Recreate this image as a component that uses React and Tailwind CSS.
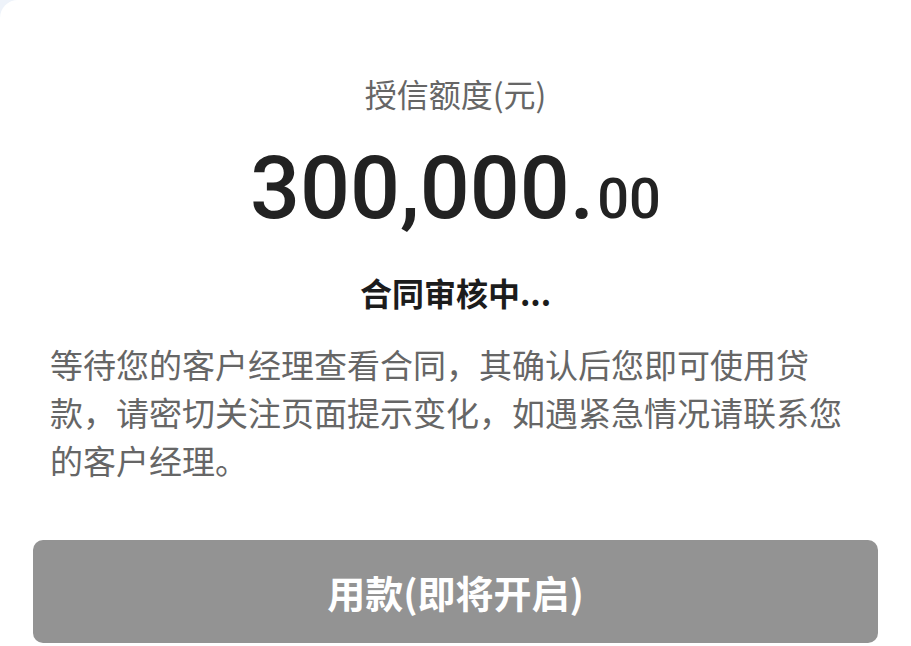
export default function App() {
    const cjk = { fontFamily: '"Noto Sans CJK SC", "Noto Sans", sans-serif' };
    return (
        <div className="min-h-screen bg-[#eef3fa]" style={cjk}>
            <div className="min-h-screen bg-white rounded-tl-[18px] flex flex-col">
                <div className="pt-[73px] text-center text-[32px] leading-[40px] text-[#666666]">授信额度(元)</div>

                <div
                    className="mt-[31px] text-center leading-none font-medium text-[#222222]"
                    style={{ fontFamily: 'Roboto, "Liberation Sans", Arial, sans-serif' }}
                >
                    <span className="text-[88px]">300,000.</span>
                    <span className="text-[56px] ml-[3px]">00</span>
                </div>

                <div className="mt-[40px] text-center text-[32px] leading-[40px] font-bold text-[#1c1c1c]">合同审核中...</div>

                <p className="mt-[28px] pl-[50px] pr-[50px] text-[33px] leading-[48px] text-[#666666]">
                    等待您的客户经理查看合同，其确认后您即可使用贷款，请密切关注页面提示变化，如遇紧急情况请联系您的客户经理。
                </p>

                <button
                    type="button"
                    className="mt-[56px] mx-[33px] h-[103px] rounded-[10px] bg-[#939393] text-white text-[38px] font-semibold flex items-center justify-center"
                >
                    用款(即将开启)
                </button>
            </div>
        </div>
    );
}
